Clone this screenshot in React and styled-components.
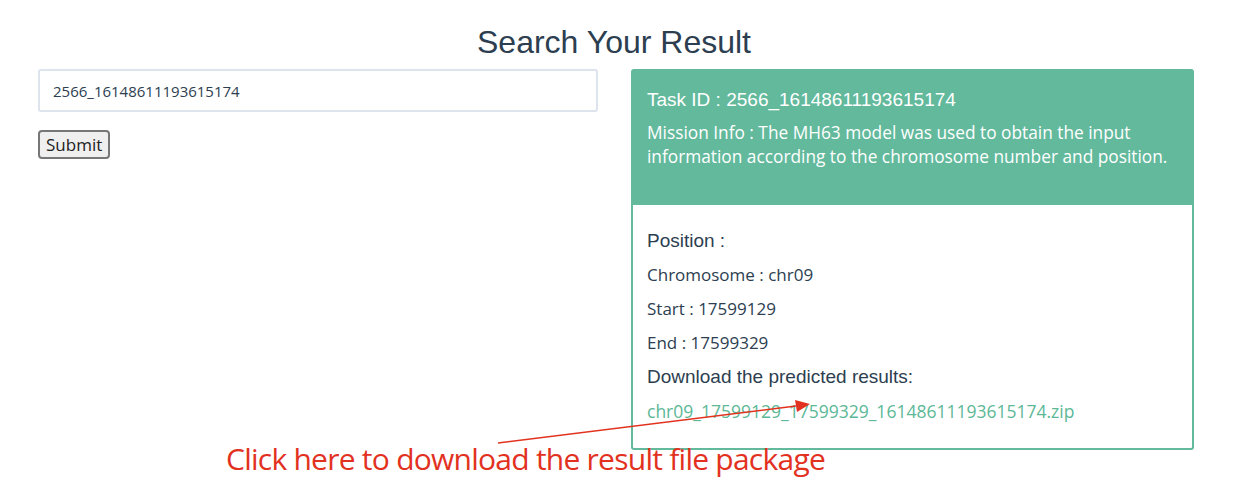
import React from "react";
import styled, { createGlobalStyle } from "styled-components";

const GlobalStyle = createGlobalStyle`
  html, body {
    margin: 0;
    padding: 0;
    background: #fff;
  }
  body {
    font-family: "Open Sans", "Liberation Sans", sans-serif;
    color: #2c3e50;
  }
`;

const Page = styled.div`
  position: relative;
  width: 1236px;
  height: 498px;
  overflow: hidden;
  padding-top: 23px;
  box-sizing: border-box;
`;

const Title = styled.h1`
  margin: 0;
  text-align: center;
  font-family: "Liberation Sans", Arial, sans-serif;
  font-weight: 400;
  font-size: 32px;
  line-height: 38px;
  color: #2c3e50;
  padding-right: 8px;
`;

const Columns = styled.div`
  display: flex;
  margin-top: 8px;
  padding-left: 38px;
  column-gap: 33px;
`;

const SearchForm = styled.form`
  width: 560px;
  display: flex;
  flex-direction: column;
  align-items: flex-start;
  row-gap: 18px;
`;

const Input = styled.input`
  width: 100%;
  height: 43px;
  box-sizing: border-box;
  border: 2px solid #dde4ee;
  border-radius: 3px;
  padding: 0 13px;
  font-family: "Open Sans", sans-serif;
  font-size: 15px;
  color: #2c3e50;
  outline: none;
`;

const Button = styled.button`
  font-family: "Open Sans", sans-serif;
  font-size: 17px;
  line-height: 21px;
  padding: 2px 6px 2px;
  color: #222;
  background: #efefef;
  border: 2px solid #777;
  border-radius: 4px;
`;

const Card = styled.div`
  width: 563px;
  height: 381px;
  box-sizing: border-box;
  border: 2px solid #62b99c;
  border-radius: 3px;
  display: flex;
  flex-direction: column;
`;

const CardHeader = styled.div`
  background: #62b99c;
  color: #fff;
  height: 134px;
  box-sizing: border-box;
  padding: 18px 14px 0;
`;

const HeaderTitle = styled.div`
  font-family: "Liberation Sans", Arial, sans-serif;
  font-size: 19px;
  line-height: 22px;
`;

const HeaderInfo = styled.div`
  margin-top: 10px;
  font-size: 17.3px;
  line-height: 24px;
`;

const CardBody = styled.div`
  padding: 25px 14px 0;
  display: flex;
  flex-direction: column;
`;

const Row = styled.div`
  font-family: ${(p) =>
    p.$label ? '"Liberation Sans", Arial, sans-serif' : '"Open Sans", sans-serif'};
  font-size: ${(p) => (p.$label ? "19px" : "17px")};
  line-height: 22px;
  margin-bottom: 12px;
  color: #2c3e50;
`;

const FileLink = styled.a`
  font-size: 17.5px;
  line-height: 22px;
  color: #5cb896;
  text-decoration: none;
`;

const Note = styled.div`
  position: absolute;
  left: 226px;
  top: 440px;
  font-family: "Open Sans", sans-serif;
  font-size: 30px;
  line-height: 38px;
  color: #e2321f;
  letter-spacing: -0.75px;
`;

const Arrow = styled.svg`
  position: absolute;
  left: 0;
  top: 0;
  pointer-events: none;
`;

export default function App() {
  return (
    <Page>
      <GlobalStyle />
      <Title>Search Your Result</Title>
      <Columns>
        <SearchForm onSubmit={(e) => e.preventDefault()}>
          <Input defaultValue="2566_16148611193615174" />
          <Button type="submit">Submit</Button>
        </SearchForm>
        <Card>
          <CardHeader>
            <HeaderTitle>Task ID : 2566_16148611193615174</HeaderTitle>
            <HeaderInfo>
              Mission Info : The MH63 model was used to obtain the input
              <br />
              information according to the chromosome number and position.
            </HeaderInfo>
          </CardHeader>
          <CardBody>
            <Row $label>Position :</Row>
            <Row>Chromosome : chr09</Row>
            <Row>Start : 17599129</Row>
            <Row>End : 17599329</Row>
            <Row $label>Download the predicted results:</Row>
            <FileLink href="#">
              chr09_17599129_17599329_16148611193615174.zip
            </FileLink>
          </CardBody>
        </Card>
      </Columns>
      <Arrow width="1236" height="498" viewBox="0 0 1236 498">
        <line x1="498" y1="443" x2="796" y2="406" stroke="#e2321f" strokeWidth="1.6" />
        <polygon points="810,404 795,400 797,412" fill="#e2321f" />
      </Arrow>
      <Note>Click here to download the result file package</Note>
    </Page>
  );
}
